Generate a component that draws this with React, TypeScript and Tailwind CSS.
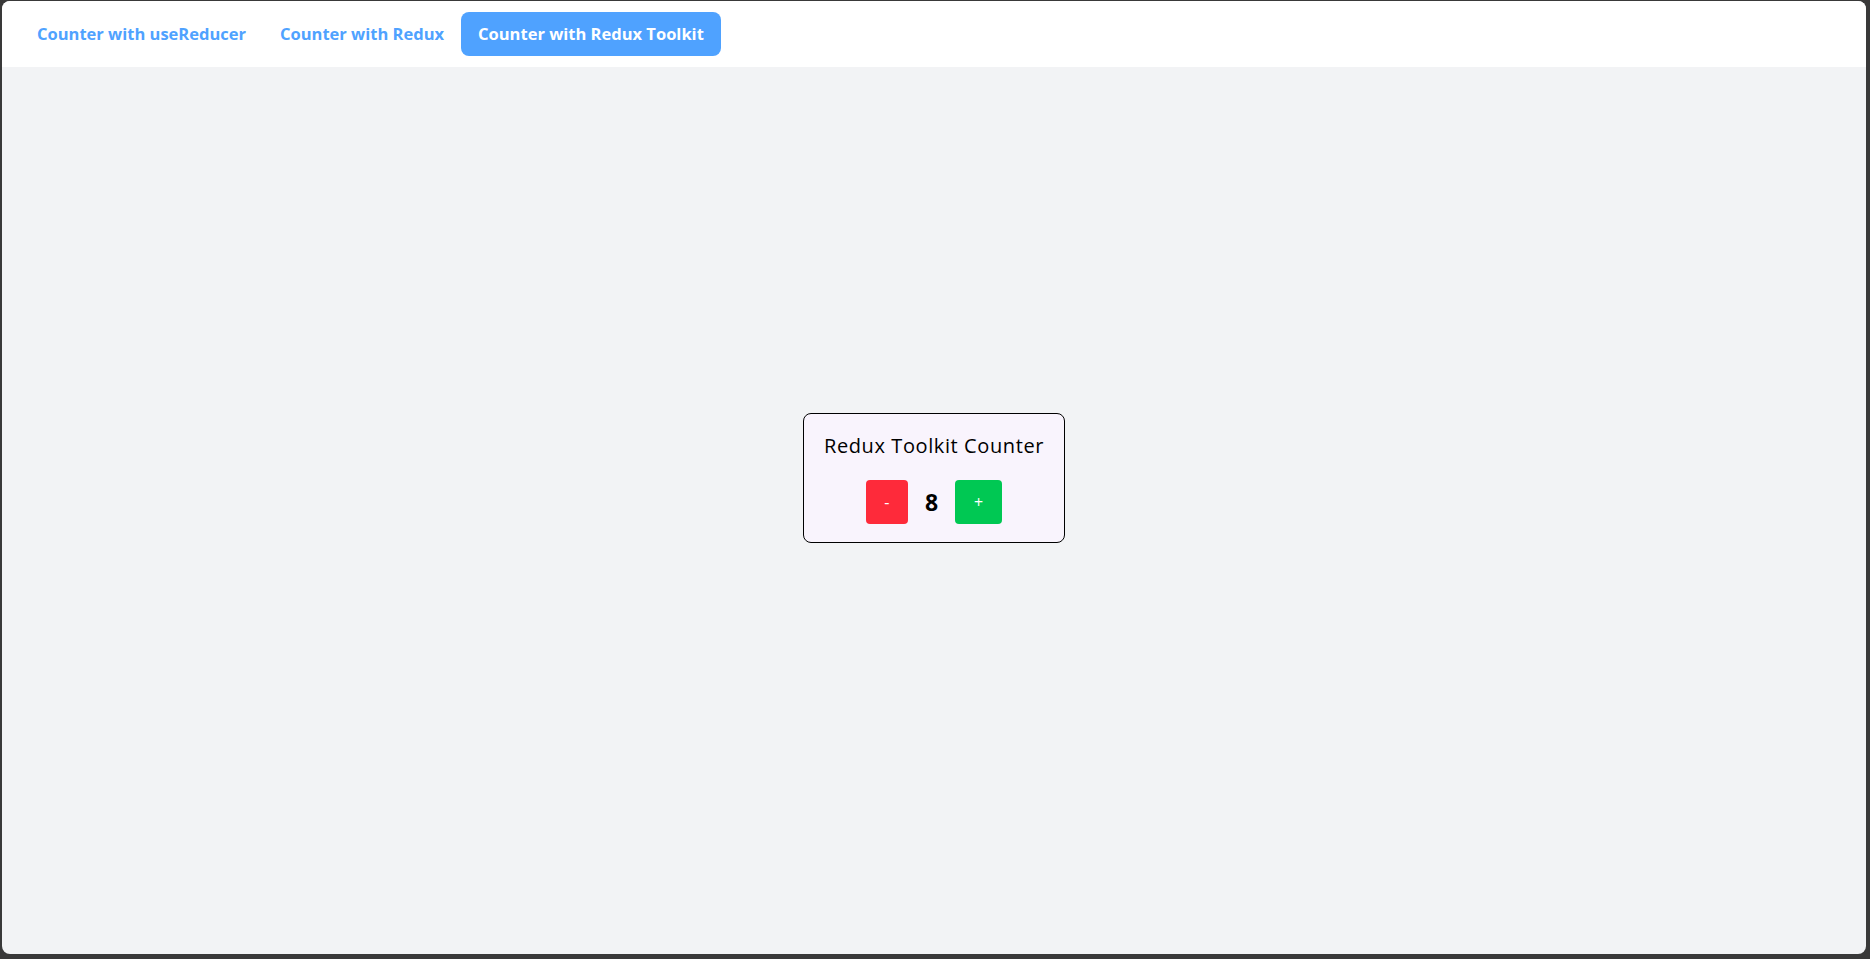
import React, { useState } from "react";

export default function App() {
  const [tab, setTab] = useState(2);
  const [count, setCount] = useState(8);
  const tabs = ["Counter with useReducer", "Counter with Redux", "Counter with Redux Toolkit"];
  return (
    <div className="h-screen w-full bg-[#393939] pt-[1px] pl-[2px] pr-[4px] pb-[5px]" style={{ fontFamily: "'Open Sans', 'Noto Sans', sans-serif" }}>
      <div className="flex h-full flex-col overflow-hidden rounded-[8px] bg-[#f2f3f5]">
        <nav className="flex h-[66px] shrink-0 items-center bg-white pl-[18px]">
          {tabs.map((t, i) => (
            <button
              key={t}
              onClick={() => setTab(i)}
              className={
                i === tab
                  ? "h-[44px] rounded-[8px] bg-[#4fa2ff] px-[17px] text-[16.5px] font-bold text-white"
                  : "h-[44px] rounded-[8px] px-[17px] text-[16.5px] font-bold text-[#4fa2ff]"
              }
            >
              {t}
            </button>
          ))}
        </nav>
        <main className="flex flex-1 items-center justify-center pb-[65px]">
          <div className="flex flex-col items-center rounded-[8px] border border-black bg-[#f9f4fd] px-5 pt-[18px] pb-[18px]">
            <h2 className="text-[20px] leading-[28px] tracking-[0.6px] text-black">Redux Toolkit Counter</h2>
            <div className="mt-[20px] flex items-center gap-[17px]">
              <button
                onClick={() => setCount(count - 1)}
                className="h-[44px] w-[42px] rounded-[4px] bg-[#fe2a3a] text-[16px] text-white"
              >
                -
              </button>
              <span className="text-[23px] font-bold leading-[30px] text-black">{count}</span>
              <button
                onClick={() => setCount(count + 1)}
                className="h-[44px] w-[47px] rounded-[4px] bg-[#00c853] text-[16px] text-white"
              >
                +
              </button>
            </div>
          </div>
        </main>
      </div>
    </div>
  );
}
